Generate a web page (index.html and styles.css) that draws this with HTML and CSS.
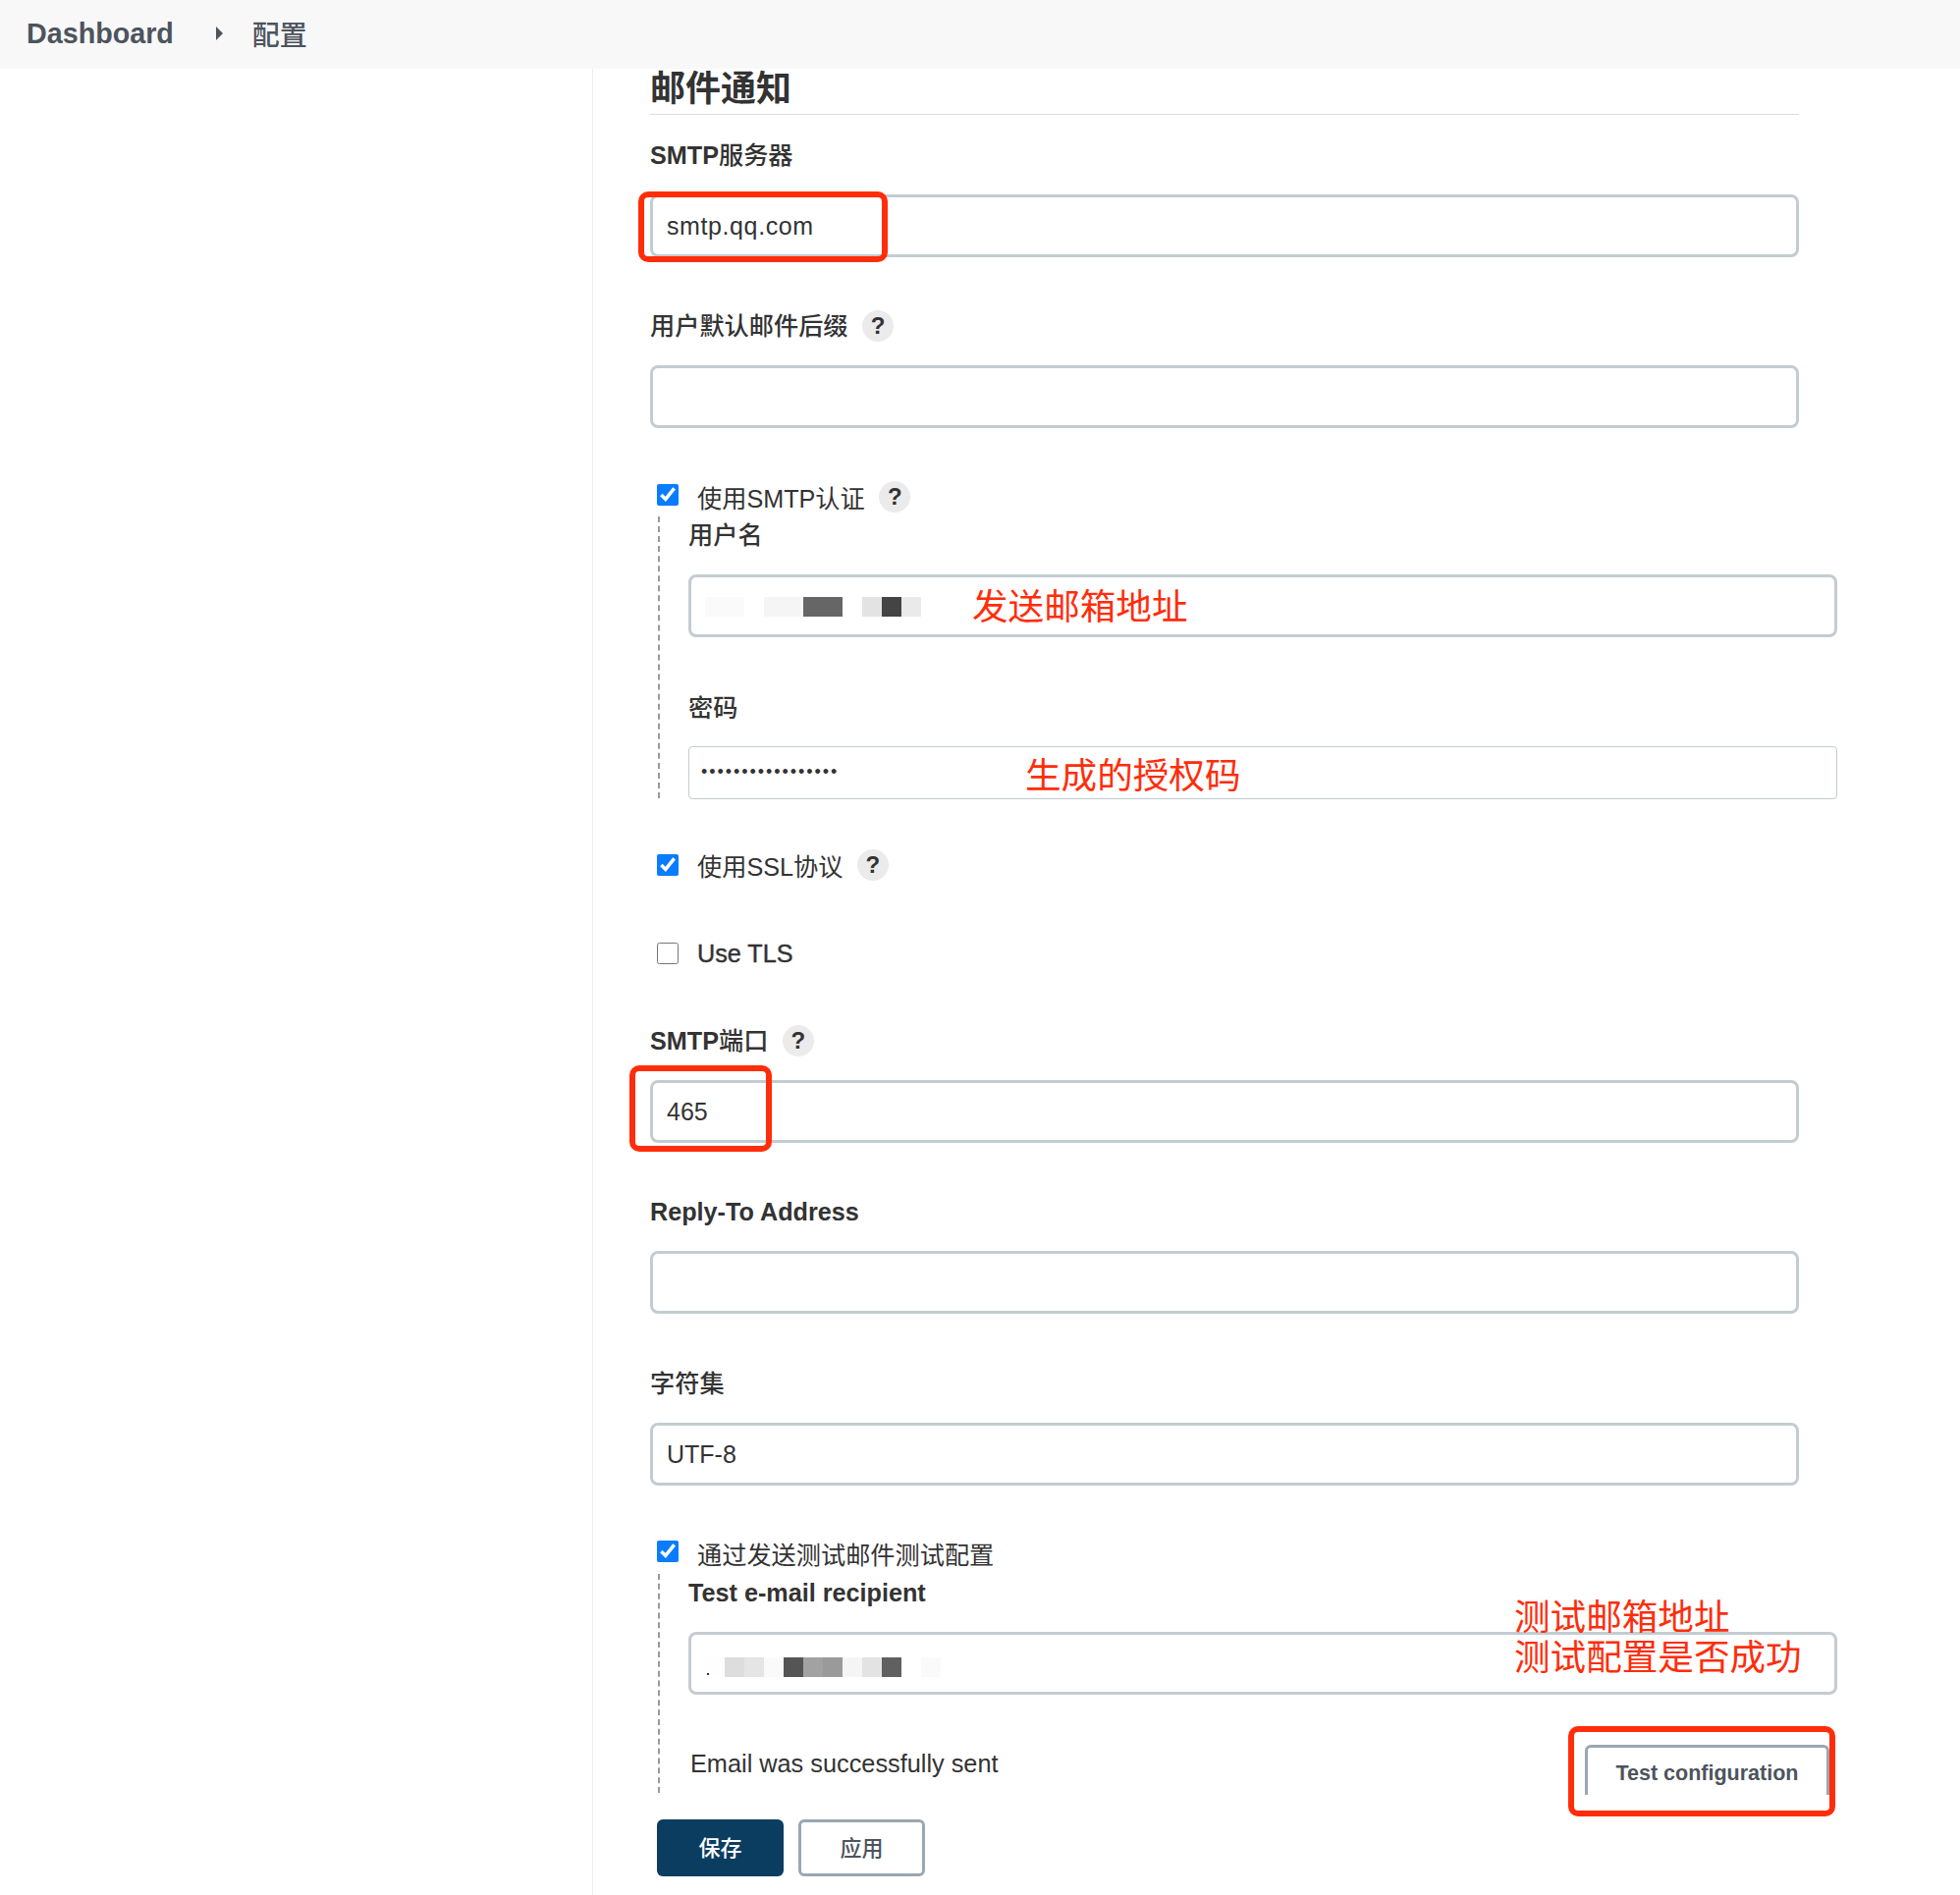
FILE: index.html
```html
<!DOCTYPE html>
<html>
<head>
    <title>配置</title>
    <link rel="stylesheet" href="styles.css">
</head>
<body>
    <div class="topbar">
        <span class="crumb-root">Dashboard</span>
        <span class="crumb-arrow"></span>
        <span class="crumb">配置</span>
    </div>

    <div class="layout">
        <div class="sidebar"></div>
        <div class="main">
            <h2 class="section-title">邮件通知</h2>

            <div class="field">
                <div class="label">SMTP<span class="cjk">服务器</span></div>
                <div class="input-wrap">
                    <input class="text-input host-input" type="text" value="smtp.qq.com">
                    <div class="mark mark-host"></div>
                </div>
            </div>

            <div class="field">
                <div class="label"><span class="cjk">用户默认邮件后缀</span><span class="help">?</span></div>
                <div class="input-wrap">
                    <input class="text-input" type="text">
                </div>
            </div>

            <div class="check-row row-auth">
                <input type="checkbox" checked>
                <span>使用SMTP认证</span><span class="help">?</span>
            </div>
            <div class="nested nested-auth">
                <div class="label"><span class="cjk">用户名</span></div>
                <div class="input-wrap">
                    <input class="text-input" type="text">
                    <div class="mosaic">
                        <i class="c1 w2"></i><i class="blank"></i><i class="c2 w2"></i><i class="c3 w2"></i><i class="blank"></i><i class="c4"></i><i class="c5"></i><i class="c6"></i>
                    </div>
                    <div class="note note-user">发送邮箱地址</div>
                </div>
                <div class="label label-gap"><span class="cjk">密码</span></div>
                <div class="input-wrap wrap-pass">
                    <input class="password-input" type="password" value="aaaaaaaaaaaaaaaaa">
                    <div class="note note-pass">生成的授权码</div>
                </div>
            </div>

            <div class="check-row row-ssl">
                <input type="checkbox" checked>
                <span>使用SSL协议</span><span class="help">?</span>
            </div>
            <div class="check-row row-tls">
                <input type="checkbox">
                <span class="tls">Use TLS</span>
            </div>

            <div class="field field-port">
                <div class="label">SMTP<span class="cjk">端口</span><span class="help">?</span></div>
                <div class="input-wrap">
                    <input class="text-input" type="text" value="465">
                    <div class="mark mark-port"></div>
                </div>
            </div>

            <div class="field">
                <div class="label">Reply-To Address</div>
                <div class="input-wrap">
                    <input class="text-input" type="text">
                </div>
            </div>

            <div class="field">
                <div class="label"><span class="cjk">字符集</span></div>
                <div class="input-wrap">
                    <input class="text-input" type="text" value="UTF-8">
                </div>
            </div>

            <div class="check-row row-test">
                <input type="checkbox" checked>
                <span>通过发送测试邮件测试配置</span>
            </div>
            <div class="nested nested-test">
                <div class="label">Test e-mail recipient</div>
                <div class="input-wrap">
                    <input class="text-input" type="text">
                    <div class="mosaic mosaic-test">
                        <i class="c7"></i><i class="c8"></i><i class="c9"></i><i class="c1"></i><i class="c10"></i><i class="c11"></i><i class="c12"></i><i class="c2"></i><i class="c4"></i><i class="c13"></i><i class="blank"></i><i class="c1"></i>
                    </div>
                    <div class="note note-test">测试邮箱地址<br>测试配置是否成功</div>
                </div>
                <div class="test-row">
                    <span class="test-result">Email was successfully sent</span>
                    <button class="test-btn">Test configuration</button>
                    <div class="mark mark-test"></div>
                </div>
            </div>

            <div class="actions">
                <button class="btn-save">保存</button>
                <button class="btn-apply">应用</button>
            </div>
        </div>
    </div>
</body>
</html>
```

FILE: styles.css
```css
/* Mail notification config page */
body {
    margin: 0;
    height: 1930px;
    overflow: hidden;
    background: #fff;
    color: #333;
    font-family: "Liberation Sans", "Noto Sans CJK SC", sans-serif;
    font-size: 25.2px;
}

.topbar {
    box-sizing: border-box;
    height: 70px;
    padding: 0 0 2px 27px;
    background: #f8f8f8;
    display: flex;
    align-items: center;
    color: #4d545d;
}

.crumb-root {
    font-size: 28.7px;
    font-weight: bold;
}

.crumb-arrow {
    width: 0;
    height: 0;
    margin-left: 43px;
    margin-right: 30px;
    border-left: 7px solid #4d545d;
    border-top: 7px solid transparent;
    border-bottom: 7px solid transparent;
}

.crumb {
    font-size: 28px;
    font-weight: 500;
}

.layout {
    display: flex;
}

.sidebar {
    width: 603px;
    height: 1860px;
    border-right: 1px solid #eee;
}

.main {
    width: 1170px;
    margin-left: 58px;
}

.section-title {
    margin: 0 0 24px;
    height: 46px;
    line-height: 42px;
    font-size: 36px;
    font-weight: bold;
    border-bottom: 1px solid #ddd;
}

.field {
    height: 174.4px;
}

.label {
    box-sizing: border-box;
    height: 32px;
    padding-top: 2px;
    line-height: 32px;
    font-weight: bold;
    display: flex;
    align-items: center;
}

.cjk {
    font-weight: 500;
}

.input-wrap {
    position: relative;
    margin-top: 25px;
}

.text-input {
    display: block;
    box-sizing: border-box;
    width: 100%;
    height: 64px;
    padding: 1px 14px 0;
    border: 3px solid #c3ccd1;
    border-radius: 8px;
    background: #fff;
    color: #333;
    font-family: inherit;
    font-size: 25px;
}

.host-input {
    padding-top: 0;
    letter-spacing: 0.6px;
}

.password-input {
    display: block;
    box-sizing: border-box;
    width: 100%;
    height: 54px;
    padding: 0 12px;
    border: 1.5px solid #c3ccd1;
    border-radius: 4px;
    color: #333;
    font-size: 18px;
    letter-spacing: 1.95px;
}

.help {
    display: inline-block;
    flex: none;
    width: 32px;
    height: 32px;
    line-height: 32px;
    margin-left: 14.5px;
    border-radius: 50%;
    background: #ebebeb;
    color: #333;
    text-align: center;
    font-size: 24px;
    font-weight: bold;
}

.check-row {
    box-sizing: border-box;
    display: flex;
    align-items: center;
    height: 32px;
    padding: 2px 0 0 7px;
}

.check-row input {
    width: 22px;
    height: 22px;
    margin: 0 19px 0 0;
    accent-color: #0a7cff;
}

.row-auth {
    margin-top: -1px;
}

.row-test {
    margin-top: -0.7px;
}

.row-auth input,
.row-test input {
    margin-top: -4px;
}

.tls {
    -webkit-text-stroke: 0.4px #333;
}

.row-ssl {
    margin-top: 51px;
}

.row-tls {
    margin-top: 58.5px;
}

.nested {
    width: 1170px;
    margin-left: 8px;
    margin-top: 5px;
    padding-left: 29px;
    border-left: 2px dashed #999;
}

.nested-auth {
    padding-top: 2px;
    height: 285.2px;
}

.nested-test {
    margin-top: 5.5px;
    padding-top: 2px;
    height: 221px;
}

.label-gap {
    margin-top: 55px;
}

.wrap-pass {
    margin-top: 24px;
}

.field-port {
    margin-top: 56.5px;
}

.mosaic {
    position: absolute;
    left: 17px;
    top: 23px;
    display: flex;
}

.mosaic i {
    display: block;
    position: relative;
    width: 20px;
    height: 20px;
}

.mosaic i.w2 {
    width: 40px;
}

.mosaic-test {
    top: 26px;
}

.c1 { background: #fafafa; }
.c2 { background: #f5f5f5; }
.c3 { background: #666; }
.c4 { background: #e3e3e3; }
.c5 { background: #444; }
.c6 { background: #eaeaea; }
.c7 { background: #fefefe; }
.c8 { background: #ddd; }
.c9 { background: #e5e5e5; }
.c10 { background: #555; }
.c11 { background: #a2a2a2; }
.c12 { background: #9a9a9a; }
.c13 { background: #606060; }

.c7::after {
    content: "";
    position: absolute;
    left: 2px;
    bottom: 2px;
    width: 2px;
    height: 2px;
    background: #333;
}

.note {
    position: absolute;
    color: #ff2d0a;
    font-size: 36.6px;
    line-height: 41.5px;
    white-space: nowrap;
}

.note-user {
    left: 289px;
    top: 13px;
}

.note-pass {
    left: 343px;
    top: 10px;
}

.note-test {
    left: 841px;
    top: -35px;
}

.mark {
    position: absolute;
    box-sizing: border-box;
    border: 6px solid #ff2d0a;
    border-radius: 10px;
}

.mark-host {
    left: -12px;
    top: -3px;
    width: 254px;
    height: 72px;
}

.mark-port {
    left: -21px;
    top: -15px;
    width: 145px;
    height: 88px;
}

.mark-test {
    right: 2px;
    top: -19px;
    width: 272px;
    height: 92px;
}

.test-row {
    position: relative;
    display: flex;
    justify-content: space-between;
    margin-top: 51px;
    height: 49px;
}

.test-result {
    padding-left: 2px;
    padding-top: 1px;
    font-size: 25.3px;
    line-height: 36px;
}

.test-btn {
    box-sizing: border-box;
    width: 249px;
    height: 51px;
    margin-right: 8px;
    padding: 6px 0 0;
    background: #fff;
    border: 3px solid #9aa7b0;
    border-bottom: 0;
    border-radius: 6px 6px 0 0;
    color: #4d545d;
    font-family: inherit;
    font-size: 21.5px;
    font-weight: bold;
}

.actions {
    display: flex;
    gap: 15px;
    margin-top: 27px;
    margin-left: 7px;
}

.btn-save,
.btn-apply {
    box-sizing: border-box;
    width: 129px;
    height: 58px;
    padding: 0 0 3px;
    border-radius: 6px;
    font-family: inherit;
    font-size: 22px;
    font-weight: 500;
}

.btn-save {
    background: #0b3d60;
    border: 0;
    color: #fff;
}

.btn-apply {
    background: #fff;
    border: 3px solid #9aa7b0;
    color: #4d545d;
}
```
